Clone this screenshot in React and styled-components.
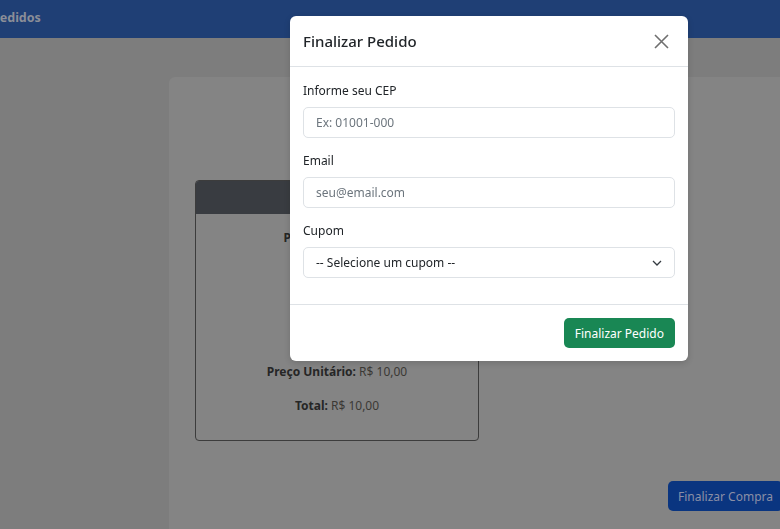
import React from 'react';
import styled, { createGlobalStyle } from 'styled-components';

const GlobalStyle = createGlobalStyle`
  html, body {
    margin: 0;
    height: 100%;
    overflow: hidden;
  }
  body {
    background-color: #7d7d7d;
    font-family: 'Noto Sans', 'Open Sans', sans-serif;
    font-size: 12px;
    color: #212529;
  }
  * {
    box-sizing: border-box;
  }
`;

const Navbar = styled.nav`
  display: flex;
  align-items: center;
  height: 38px;
  background-color: #1f3f75;
`;

const Brand = styled.span`
  margin-left: -8px;
  margin-top: -4px;
  font-size: 12.5px;
  font-weight: 700;
  color: #8b8e98;
`;

const Container = styled.main`
  display: flex;
  flex-direction: column;
  width: 630px;
  min-height: 460px;
  margin: 39px 0 0 169px;
  padding: 103px 16px 0 26px;
  background-color: #848484;
  border-radius: 6px 0 0 0;
`;

const Card = styled.div`
  width: 284px;
  border: 1px solid #3c3c3c;
  border-radius: 4px;
  overflow: hidden;
`;

const CardHeader = styled.div`
  height: 33px;
  background-color: #393c41;
  color: #808080;
  display: flex;
  align-items: center;
  justify-content: center;
  font-weight: 600;
`;

const CardBody = styled.div`
  padding: 14px 13px 11px;
  text-align: center;
`;

const Line = styled.p`
  margin: 0 0 14px;
  font-size: 12px;
  line-height: 19.5px;
  color: #3b3935;

  strong {
    color: #262626;
  }
`;

const Actions = styled.div`
  display: flex;
  justify-content: flex-end;
  margin-top: 40px;
`;

const CheckoutButton = styled.button`
  height: 30px;
  padding: 0 10px;
  border: none;
  border-radius: 5px;
  background-color: #0a3580;
  color: #8a8fa6;
  font-family: inherit;
  font-size: 12px;
`;

const Modal = styled.div`
  position: fixed;
  top: 16px;
  left: 290px;
  width: 398px;
  background-color: #fff;
  border-radius: 6px;
  box-shadow: 0 2px 6px rgba(0, 0, 0, 0.15);
`;

const ModalHeader = styled.div`
  display: flex;
  align-items: center;
  justify-content: space-between;
  height: 51px;
  padding: 0 13px;
  border-bottom: 1px solid #dee2e6;
`;

const ModalTitle = styled.h5`
  margin: 0;
  font-size: 15px;
  font-weight: 500;
  color: #212529;
`;

const CloseButton = styled.button`
  display: flex;
  padding: 0;
  border: none;
  background: none;
  margin-right: 6px;
`;

const ModalBody = styled.div`
  padding: 14px 13px 13px;
`;

const Group = styled.div`
  display: flex;
  flex-direction: column;
  margin-bottom: 13px;
`;

const Label = styled.label`
  line-height: 19px;
  margin-bottom: 7px;
  color: #212529;
`;

const Input = styled.input`
  height: 31px;
  padding: 0 12px;
  border: 1px solid #dee2e6;
  border-radius: 5px;
  font-family: inherit;
  font-size: 12px;
  color: #212529;

  &::placeholder {
    color: #6c757d;
  }
`;

const SelectBox = styled.div`
  display: flex;
  align-items: center;
  justify-content: space-between;
  height: 31px;
  padding: 0 12px 0 12px;
  border: 1px solid #dee2e6;
  border-radius: 5px;
  color: #212529;
`;

const ModalFooter = styled.div`
  display: flex;
  justify-content: flex-end;
  padding: 13px;
  border-top: 1px solid #dee2e6;
`;

const SubmitButton = styled.button`
  height: 30px;
  padding: 0 11px;
  border: none;
  border-radius: 5px;
  background-color: #198754;
  color: #fff;
  font-family: inherit;
  font-size: 12px;
`;

const App = () => {
  return (
    <>
      <GlobalStyle />
      <Navbar>
        <Brand>Pedidos</Brand>
      </Navbar>
      <Container>
        <Card>
          <CardHeader>Pedido</CardHeader>
          <CardBody>
            <Line>
              <strong>Produto:</strong> Camiseta
            </Line>
            <Line>
              <strong>Cor:</strong> Azul
            </Line>
            <Line>
              <strong>Tamanho:</strong> M
            </Line>
            <Line>
              <strong>Qtd:</strong> 1
            </Line>
            <Line>
              <strong>Preço Unitário:</strong> R$ 10,00
            </Line>
            <Line>
              <strong>Total:</strong> R$ 10,00
            </Line>
          </CardBody>
        </Card>
        <Actions>
          <CheckoutButton>Finalizar Compra</CheckoutButton>
        </Actions>
      </Container>

      <Modal>
        <ModalHeader>
          <ModalTitle>Finalizar Pedido</ModalTitle>
          <CloseButton>
            <svg width="15" height="15" viewBox="0 0 15 15">
              <path
                d="M1 1 L14 14 M14 1 L1 14"
                stroke="#6f6f6f"
                strokeWidth="1.6"
                fill="none"
              />
            </svg>
          </CloseButton>
        </ModalHeader>
        <ModalBody>
          <Group>
            <Label>Informe seu CEP</Label>
            <Input placeholder="Ex: 01001-000" />
          </Group>
          <Group>
            <Label>Email</Label>
            <Input placeholder="seu@email.com" />
          </Group>
          <Group>
            <Label>Cupom</Label>
            <SelectBox>
              <span>-- Selecione um cupom --</span>
              <svg width="10" height="6" viewBox="0 0 10 6">
                <path
                  d="M1 1 L5 5 L9 1"
                  stroke="#343a40"
                  strokeWidth="1.3"
                  fill="none"
                />
              </svg>
            </SelectBox>
          </Group>
        </ModalBody>
        <ModalFooter>
          <SubmitButton>Finalizar Pedido</SubmitButton>
        </ModalFooter>
      </Modal>
    </>
  );
};

export default App;
